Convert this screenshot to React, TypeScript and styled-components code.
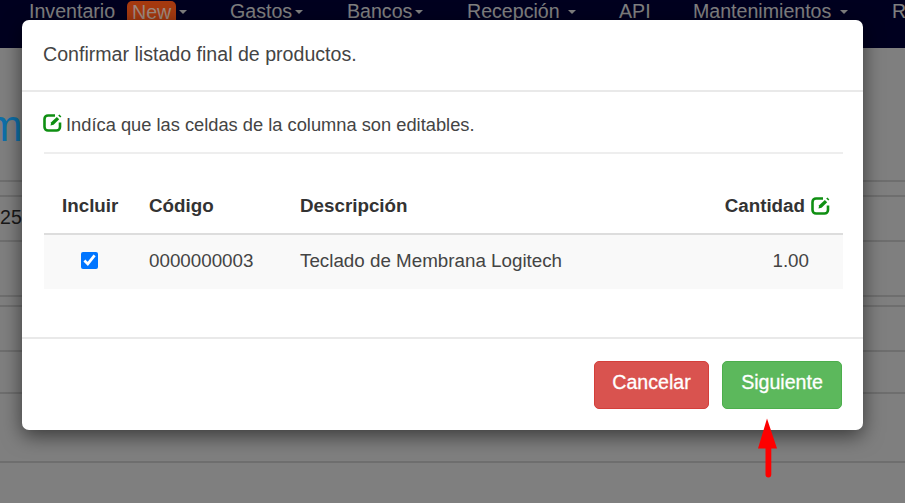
import React from 'react';
import styled, { createGlobalStyle } from 'styled-components';

const Global = createGlobalStyle`
  html, body { margin: 0; padding: 0; background: #fff; }
  * { box-sizing: border-box; }
`;

const Page = styled.div`
  position: relative;
  width: 905px;
  height: 503px;
  overflow: hidden;
  background: #fff;
  font-family: "Liberation Sans", Arial, sans-serif;
`;

const Nav = styled.nav`
  height: 48px;
  background: #00003e;
  display: flex;
  align-items: flex-start;
  padding-left: 29px;
  color: #fff;
  font-size: 19.6px;
  line-height: 22px;
  white-space: nowrap;
`;

const NavItem = styled.span<{ $w: number }>`
  flex: 0 0 ${p => p.$w}px;
  display: inline-flex;
  align-items: center;
`;

const Badge = styled.span`
  position: relative;
  z-index: 1;
  background: #a63a10;
  color: #a08a80;
  border-radius: 5px 5px 0 0;
  padding: 0 5px;
  margin-left: 12px;
  height: 20px;
`;

const Caret = styled.i`
  display: inline-block;
  width: 0;
  height: 0;
  margin: 2px 0 0 3px;
  border-top: 4px solid currentColor;
  border-left: 4px solid transparent;
  border-right: 4px solid transparent;
`;

const Content = styled.div`
  display: flex;
  flex-direction: column;
`;

const Heading = styled.h1`
  position: relative;
  z-index: 1;
  height: 132px;
  margin: 0 0 0 -14px;
  padding-top: 53px;
  font-size: 44px;
  font-weight: 400;
  line-height: 50px;
  color: #0e6fa8;
`;

const BgRow = styled.div<{ $h: number }>`
  height: ${p => p.$h}px;
  border-top: 2px solid #dddddd;
  font-size: 19.6px;
  color: #333;
  line-height: 40px;
`;

const Backdrop = styled.div`
  position: absolute;
  inset: 0;
  background: rgba(0, 0, 0, 0.5);
`;

const Modal = styled.div`
  position: absolute;
  z-index: 2;
  left: 22px;
  top: 20px;
  width: 841px;
  height: 410px;
  background: #fff;
  border-radius: 7px;
  box-shadow: 0 6px 20px rgba(0, 0, 0, 0.55);
  display: flex;
  flex-direction: column;
  color: #333;
`;

const Header = styled.header`
  height: 72px;
  padding: 22px 21px 0;
  border-bottom: 2px solid #e9e9e9;
  font-size: 19.6px;
  line-height: 24px;
  color: #444;
`;

const Body = styled.div`
  flex: 1;
  padding: 0 20px 0 22px;
`;

const Hint = styled.p`
  height: 62px;
  margin: 0;
  padding-top: 21px;
  border-bottom: 2px solid #eeeeee;
  font-size: 18.3px;
  line-height: 24px;
  color: #444;
  display: flex;
  align-items: flex-start;
  gap: 3px;
`;

const Table = styled.table`
  width: 100%;
  margin-top: 27px;
  border-collapse: collapse;
  table-layout: fixed;
  font-size: 18.8px;
`;

const Th = styled.th<{ $w?: number; $right?: boolean }>`
  ${p => (p.$w ? `width: ${p.$w}px;` : '')}
  height: 53px;
  padding: 0 12px 2px ${p => (p.$right ? 0 : '18px')};
  text-align: ${p => (p.$right ? 'right' : 'left')};
  border-bottom: 2px solid #dddddd;
  font-weight: 700;
  color: #333;
  white-space: nowrap;
`;

const Row = styled.tr`
  background: #f9f9f9;
`;

const Td = styled.td<{ $right?: boolean }>`
  height: 55px;
  padding: 0 ${p => (p.$right ? '34px' : '12px')} 2px ${p => (p.$right ? 0 : '18px')};
  text-align: ${p => (p.$right ? 'right' : 'left')};
  color: #444;
`;

const Check = styled.input`
  display: block;
  width: 17px;
  height: 17px;
  margin: 0 0 2px 19px;
`;

const Footer = styled.footer`
  height: 93px;
  border-top: 2px solid #e9e9e9;
  padding: 22px 21px 0 0;
  display: flex;
  justify-content: flex-end;
  gap: 13px;
`;

const Btn = styled.button<{ $bg: string; $border: string; $w: number }>`
  width: ${p => p.$w}px;
  height: 48px;
  padding: 0 0 6px;
  border: 1px solid ${p => p.$border};
  border-radius: 5px;
  background: ${p => p.$bg};
  color: #fff;
  font-family: inherit;
  font-size: 19.6px;
  -webkit-text-stroke: 0.3px #fff;
`;

const ArrowSvg = styled.svg`
  position: absolute;
  z-index: 3;
  left: 757px;
  top: 418px;
`;

const EditIcon: React.FC = () => (
  <svg width="20" height="19" viewBox="0 0 20 19" fill="none" aria-hidden>
    <path d="M12 2.5H5A3.5 3.5 0 0 0 1.5 6v8A3.5 3.5 0 0 0 5 17.5h8.5A3.5 3.5 0 0 0 17 14v-4.5" stroke="#0f8f12" strokeWidth="2.6" />
    <path d="M7.5 12.5l.7-3.2 5.6-5.4 2.4 2.4-5.6 5.4z" fill="#0f8f12" />
    <path d="M15.2 2.6l1.2-1.2 2 2-1.2 1.2z" fill="#0f8f12" />
  </svg>
);

const IconSlot = styled.span`
  display: inline-flex;
  margin-left: 6px;
  vertical-align: -3px;
`;

const HintIcon = styled.span`
  display: inline-flex;
  margin: 0 0 0 -1px;
  flex: none;
`;

export default function App() {
  return (
    <Page>
      <Global />
      <Nav>
        <NavItem $w={201}>Inventario<Badge>New</Badge><Caret /></NavItem>
        <NavItem $w={117}>Gastos<Caret /></NavItem>
        <NavItem $w={120}>Bancos<Caret /></NavItem>
        <NavItem $w={152}>Recepción&nbsp;<Caret /></NavItem>
        <NavItem $w={74}>API</NavItem>
        <NavItem $w={199}>Mantenimientos&nbsp;<Caret /></NavItem>
        <NavItem $w={40}>Reportes</NavItem>
      </Nav>
      <Content>
        <Heading>m</Heading>
        <BgRow $h={15} />
        <BgRow $h={45}>25</BgRow>
        <BgRow $h={55} />
        <BgRow $h={10} />
        <BgRow $h={45} />
        <BgRow $h={42} />
        <BgRow $h={69} />
        <BgRow $h={42} />
      </Content>
      <Backdrop />
      <Modal role="dialog">
        <Header>Confirmar listado final de productos.</Header>
        <Body>
          <Hint>
            <HintIcon><EditIcon /></HintIcon>
            Indíca que las celdas de la columna son editables.
          </Hint>
          <Table>
            <thead>
              <tr>
                <Th $w={87}>Incluir</Th>
                <Th $w={151}>Código</Th>
                <Th>Descripción</Th>
                <Th $w={150} $right>Cantidad<IconSlot><EditIcon /></IconSlot></Th>
              </tr>
            </thead>
            <tbody>
              <Row>
                <Td><Check type="checkbox" defaultChecked /></Td>
                <Td>0000000003</Td>
                <Td>Teclado de Membrana Logitech</Td>
                <Td $right>1.00</Td>
              </Row>
            </tbody>
          </Table>
        </Body>
        <Footer>
          <Btn $bg="#d9534f" $border="#d43f3a" $w={115}>Cancelar</Btn>
          <Btn $bg="#5cb85c" $border="#4cae4c" $w={120}>Siguiente</Btn>
        </Footer>
      </Modal>
      <ArrowSvg width="20" height="60" viewBox="0 0 20 60" aria-hidden>
        <path d="M10 0.5L1 30.5h7.5v26a2.9 2.9 0 0 0 5.8 0v-26H20z" fill="#fe0000" />
      </ArrowSvg>
    </Page>
  );
}
